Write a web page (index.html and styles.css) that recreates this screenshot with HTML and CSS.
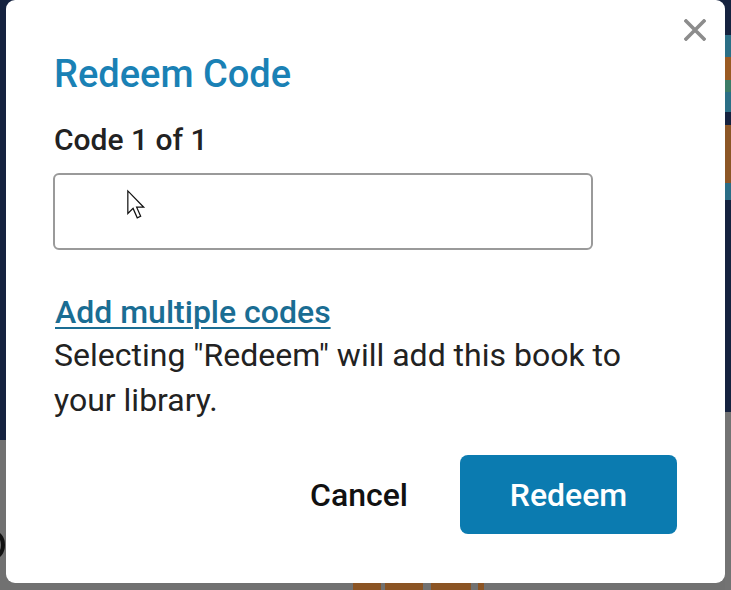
FILE: index.html
```html
<!DOCTYPE html>
<html lang="en">
<head>
<meta charset="utf-8">
<title>Redeem Code</title>
<link rel="stylesheet" href="styles.css">
</head>
<body>
<div class="backdrop" aria-hidden="true">
  <span class="strip s1"></span>
  <span class="strip s2"></span>
  <span class="strip s3"></span>
  <span class="strip s4"></span>
  <span class="strip s5"></span>
  <span class="strip s6"></span>
  <span class="ring"></span>
  <span class="brick b1"></span>
  <span class="brick b2"></span>
  <span class="brick b3"></span>
  <span class="brick b4"></span>
</div>
<div class="modal" role="dialog" aria-labelledby="dlg-title">
  <button class="close" aria-label="Close">
    <svg width="22" height="22" viewBox="0 0 22 22"><path d="M2 2 L20 20 M20 2 L2 20" stroke="#8c8c8c" stroke-width="3.6" stroke-linecap="square"/></svg>
  </button>
  <h1 id="dlg-title" class="title">Redeem Code</h1>
  <label class="label" for="code">Code 1 of 1</label>
  <div class="field">
    <input id="code" class="input" type="text">
    <svg class="cursor" width="22" height="32" viewBox="0 0 18 26"><path d="M1.5 1.5 L1.5 20 L5.8 15.8 L9.2 23.5 L12 22.2 L8.7 14.8 L14.5 14.8 Z" fill="#fff" stroke="#111" stroke-width="1" stroke-linejoin="miter"/></svg>
  </div>
  <a class="link" href="#">Add multiple codes</a>
  <p class="desc">Selecting "Redeem" will add this book to your library.</p>
  <div class="actions">
    <button class="btn-cancel">Cancel</button>
    <button class="btn-redeem">Redeem</button>
  </div>
</div>
</body>
</html>
```
FILE: styles.css
```css
* { box-sizing: border-box; }
html, body { margin: 0; height: 100%; }
body {
  width: 731px;
  height: 590px;
  overflow: hidden;
  position: relative;
  font-family: Roboto, "Liberation Sans", Arial, sans-serif;
  background: linear-gradient(to bottom, #15223f 0, #15223f 440px, #717171 440px);
  padding: 0 6px 7px 6px;
}
.backdrop { position: absolute; inset: 0; z-index: 0; }
.strip { position: absolute; right: 0; width: 6px; }
.s1 { top: 35px; height: 22px; background: #2b6f86; }
.s2 { top: 57px; height: 23px; background: #9a5a22; }
.s3 { top: 80px; height: 12px; background: #3c7c66; }
.s4 { top: 92px; height: 20px; background: #2b6f86; }
.s5 { top: 125px; height: 58px; background: #8c5626; }
.s6 { top: 183px; height: 17px; background: #2a6d86; }
.backdrop::after {
  content: ""; position: absolute; right: 0; top: 412px; width: 6px; bottom: 0; background: #737373;
}
.ring {
  position: absolute; left: -16px; top: 531px; width: 21px; height: 28px;
  border: 4px solid #111; border-radius: 50%;
}
.brick { position: absolute; bottom: 0; height: 7px; background: #8b5424; }
.b1 { left: 353px; width: 28px; }
.b2 { left: 385px; width: 38px; }
.b3 { left: 431px; width: 40px; }
.b4 { left: 478px; width: 6px; }

.modal {
  position: relative;
  z-index: 1;
  width: 719px;
  height: 583px;
  background: #fff;
  border-radius: 9px;
  padding: 52px 48px 0 48px;
  display: flex;
  flex-direction: column;
  align-items: flex-start;
}
.close {
  position: absolute; top: 19px; right: 19px;
  border: 0; background: none; padding: 0; width: 22px; height: 22px;
}
.close svg { display: block; }
.title {
  margin: 0;
  font-size: 38px;
  font-weight: 500;
  color: #1a81b5;
  line-height: 44px;
}
.label {
  margin-top: 26px;
  font-size: 30px;
  font-weight: 500;
  color: #222;
  line-height: 36px;
}
.field { position: relative; margin-top: 15px; }
.input {
  display: block;
  width: 540px; height: 77px;
  border: 2px solid #9a9a9a;
  border-radius: 6px;
  font: inherit;
  background: #fff;
  margin-left: -1px;
}
.cursor { position: absolute; left: 72px; top: 16px; }
.link {
  margin-top: 43px;
  font-size: 32px;
  font-weight: 500;
  color: #1a6d93;
  line-height: 38px;
  text-decoration: underline;
  text-underline-offset: 4px;
  text-decoration-thickness: 2px;
  margin-left: 1px;
}
.desc {
  margin: 2px 0 0;
  font-size: 32px;
  color: #222;
  line-height: 45px;
  width: 590px;
}
.actions {
  align-self: stretch;
  margin-top: 32px;
  display: flex;
  justify-content: flex-end;
  align-items: center;
  gap: 52px;
}
.btn-cancel {
  border: 0; background: none; padding: 0;
  font: inherit; font-size: 32px; font-weight: 500; color: #111;
}
.btn-redeem {
  border: 0;
  width: 217px; height: 79px;
  background: #0b7bb0;
  border-radius: 8px;
  color: #fff;
  font: inherit; font-size: 32px; font-weight: 500;
}
```
